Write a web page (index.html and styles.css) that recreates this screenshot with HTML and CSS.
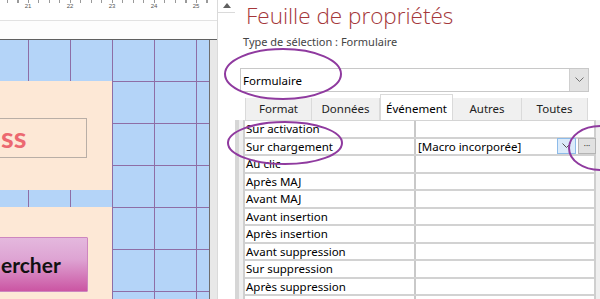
FILE: index.html
```
<!DOCTYPE html>
<html lang="fr">
<head>
    <meta charset="UTF-8">
    <title>Feuille de propriétés</title>
    <link rel="stylesheet" href="styles.css">
</head>
<body>
    <div class="form-pane">
        <div class="form-main">
            <div class="ruler">
                <span>21</span><span>22</span><span>23</span><span>24</span><span>25</span>
            </div>
            <div class="section-bar"></div>
            <div class="design-area">
                <div class="canvas">
                    <div class="section detail">
                        <div class="textbox">ss</div>
                    </div>
                    <div class="section footer">
                        <div class="search-button">ercher</div>
                    </div>
                </div>
                <div class="side-track"></div>
            </div>
        </div>
        <div class="vscroll">
            <div class="scroll-up"></div>
        </div>
    </div>

    <div class="prop-pane">
        <div class="prop-title">Feuille de propriétés</div>
        <div class="prop-type">Type de sélection : Formulaire</div>
        <div class="combo">
            <span class="combo-text">Formulaire</span>
            <span class="combo-arrow">
                <svg width="9" height="6" viewBox="0 0 9 6"><path d="M0.5 0.5 L4.5 4.5 L8.5 0.5" fill="none" stroke="#707070" stroke-width="1"/></svg>
            </span>
        </div>
        <div class="tabs">
            <div class="tab tab-format">Format</div>
            <div class="tab tab-data">Données</div>
            <div class="tab tab-event active">Événement</div>
            <div class="tab tab-other">Autres</div>
            <div class="tab tab-all">Toutes</div>
        </div>
        <div class="prop-body">
            <div class="prop-table">
                <div class="row"><div class="label">Sur activation</div><div class="value"></div></div>
                <div class="row"><div class="label">Sur chargement</div><div class="value">
                    <span class="value-text">[Macro incorporée]</span>
                    <span class="value-drop">
                        <svg width="9" height="6" viewBox="0 0 9 6"><path d="M0.5 0.5 L4.5 4.5 L8.5 0.5" fill="none" stroke="#555" stroke-width="1"/></svg>
                    </span>
                    <span class="value-build">&middot;&middot;&middot;</span>
                </div></div>
                <div class="row"><div class="label">Au clic</div><div class="value"></div></div>
                <div class="row"><div class="label">Après MAJ</div><div class="value"></div></div>
                <div class="row"><div class="label">Avant MAJ</div><div class="value"></div></div>
                <div class="row"><div class="label">Avant insertion</div><div class="value"></div></div>
                <div class="row"><div class="label">Après insertion</div><div class="value"></div></div>
                <div class="row"><div class="label">Avant suppression</div><div class="value"></div></div>
                <div class="row"><div class="label">Sur suppression</div><div class="value"></div></div>
                <div class="row"><div class="label">Après suppression</div><div class="value"></div></div>
                <div class="row"><div class="label"></div><div class="value"></div></div>
            </div>
        </div>
    </div>

    <svg class="marks" width="600" height="299" viewBox="0 0 600 299">
        <ellipse cx="283" cy="74" rx="58" ry="25" />
        <ellipse cx="285" cy="143" rx="57" ry="21" />
        <ellipse cx="600" cy="148" rx="31" ry="22" />
    </svg>
</body>
</html>
```

FILE: styles.css
```
body {
    margin: 0;
    width: 600px;
    height: 299px;
    overflow: hidden;
    display: flex;
    position: relative;
    background: #ffffff;
    font-family: "Noto Sans", "Open Sans", sans-serif;
    font-size: 11px;
    color: #000000;
}

/* Form design view */
.form-pane {
    width: 235px;
    display: flex;
    flex-shrink: 0;
}

.form-main {
    width: 217px;
    display: flex;
    flex-direction: column;
}

.ruler {
    height: 20px;
    flex-shrink: 0;
    border-bottom: 1px solid #e2e2e2;
    padding-left: 7px;
    display: flex;
    background-image: repeating-linear-gradient(to right, #9a9a9a 0 1px, transparent 1px 10.5px);
    background-size: 100% 3px;
    background-repeat: no-repeat;
    background-position: 7px 0;
}

.ruler span {
    width: 42px;
    flex-shrink: 0;
    text-align: center;
    font-family: "Liberation Sans", sans-serif;
    font-size: 6px;
    color: #555;
    padding-top: 3px;
}

.section-bar {
    height: 18px;
    flex-shrink: 0;
    background: #fdfdfd;
}

.design-area {
    flex: 1;
    min-height: 0;
    display: flex;
    border-top: 1px solid #606060;
}

.canvas {
    width: 209px;
    background-color: #b4d4f8;
    background-image:
        linear-gradient(to right, #8e6ea6 1px, transparent 1px),
        linear-gradient(to bottom, #8e6ea6 1px, transparent 1px);
    background-size: 42px 42px;
    background-position: 28px 41px;
    display: flex;
    flex-direction: column;
    overflow: hidden;
}

.side-track {
    width: 7px;
    background: #e8e8e8;
    border-left: 1px solid #6e6e6e;
}

.section {
    width: 112px;
    flex-shrink: 0;
    background: #fde8d6;
    box-sizing: border-box;
}

.detail {
    margin-top: 41px;
    height: 109px;
    padding-top: 37px;
}

.footer {
    margin-top: 17px;
    flex: 1;
    padding-top: 30px;
}

.textbox {
    box-sizing: border-box;
    margin-left: -30px;
    width: 117px;
    height: 40px;
    border: 1px solid #b9aea6;
    padding-left: 30px;
    font-family: Lato, sans-serif;
    font-weight: bold;
    font-size: 29px;
    line-height: 36px;
    color: #ec6870;
}

.search-button {
    box-sizing: border-box;
    margin-left: -30px;
    width: 118px;
    height: 55px;
    padding-left: 30px;
    border: 1px solid #cd86bf;
    border-radius: 1px;
    background: linear-gradient(to bottom, #e4b8de 0%, #dea4d3 40%, #cb55a3 100%);
    font-family: Lato, sans-serif;
    font-weight: bold;
    font-size: 21px;
    line-height: 53px;
    color: #111;
}

.vscroll {
    width: 18px;
    border-left: 1px solid #dadada;
}

.scroll-up {
    height: 12px;
    border-bottom: 1px solid #dadada;
    position: relative;
}

.scroll-up::after {
    content: "";
    position: absolute;
    left: 5px;
    top: 3px;
    border-left: 4px solid transparent;
    border-right: 4px solid transparent;
    border-bottom: 5px solid #606060;
}

/* Property sheet */
.prop-pane {
    width: 365px;
    display: flex;
    flex-direction: column;
}

.prop-title {
    height: 33px;
    flex-shrink: 0;
    padding-left: 11px;
    font-family: "Open Sans", sans-serif;
    font-weight: 300;
    font-size: 22.5px;
    line-height: 32px;
    color: #a4373a;
}

.prop-type {
    padding-left: 8px;
    height: 35px;
    flex-shrink: 0;
    line-height: 18px;
    color: #444;
}

.combo {
    flex-shrink: 0;
    margin-left: 5px;
    width: 349px;
    height: 24px;
    box-sizing: border-box;
    border: 1px solid #c8c8c8;
    display: flex;
    align-items: center;
}

.combo-text {
    flex: 1;
    padding-left: 2px;
    font-size: 11.5px;
}

.combo-arrow {
    width: 18px;
    height: 22px;
    background: #e3e3e3;
    border-left: 1px solid #cfcfcf;
    display: flex;
    align-items: center;
    justify-content: center;
}

.tabs {
    flex-shrink: 0;
    margin-top: 2px;
    margin-left: 10px;
    height: 26px;
    display: flex;
    align-items: flex-end;
}

.tab {
    height: 22px;
    box-sizing: border-box;
    background: #f0f0f0;
    border-right: 1px solid #dadada;
    text-align: center;
    font-size: 11.5px;
    line-height: 21px;
    color: #222;
}

.tab-format { width: 67px; border-left: 1px solid #dadada; }
.tab-data { width: 68px; }
.tab-event { width: 73px; }
.tab-other { width: 69px; }
.tab-all { width: 66px; }

.tab.active {
    height: 26px;
    background: #ffffff;
    border: 1px solid #dadada;
    border-bottom: none;
    line-height: 27px;
    color: #000;
}

.prop-body {
    flex: 1;
    min-height: 0;
    overflow: hidden;
    border-left: 4px solid #d6d6d6;
    padding-left: 4px;
    background: #efefef;
}

.prop-table {
    width: 353px;
    background: #ffffff;
    border-left: 2px solid #cfcfcf;
    border-right: 2px solid #cfcfcf;
    border-top: 1px solid #d4d4d4;
    box-sizing: border-box;
}

.row {
    height: 17.5px;
    box-sizing: border-box;
    border-bottom: 2px solid #d2d2d2;
    display: flex;
}

.label {
    width: 168px;
    padding-left: 1px;
    border-right: 2px solid #c9c9c9;
    line-height: 16px;
    font-size: 11.5px;
    white-space: nowrap;
}

.value {
    flex: 1;
    display: flex;
    align-items: stretch;
    font-size: 11.5px;
    line-height: 16px;
}

.value-text {
    flex: 1;
    padding-left: 2px;
}

.value-drop {
    width: 17px;
    background: #dcebfa;
    border: 1px solid #8dbbe9;
    display: flex;
    align-items: center;
    justify-content: center;
    margin-top: -1px;
}

.value-build {
    width: 16px;
    margin-left: 2px;
    margin-right: -2px;
    margin-top: -1px;
    background: #e1e1e1;
    border: 1px solid #b4b4b4;
    text-align: center;
    font-size: 8px;
    line-height: 14px;
    color: #333;
}

/* Hand-drawn annotation marks */
.marks {
    position: absolute;
    left: 0;
    top: 0;
    pointer-events: none;
}

.marks ellipse {
    fill: none;
    stroke: #8f3a9f;
    stroke-width: 2;
}
```
